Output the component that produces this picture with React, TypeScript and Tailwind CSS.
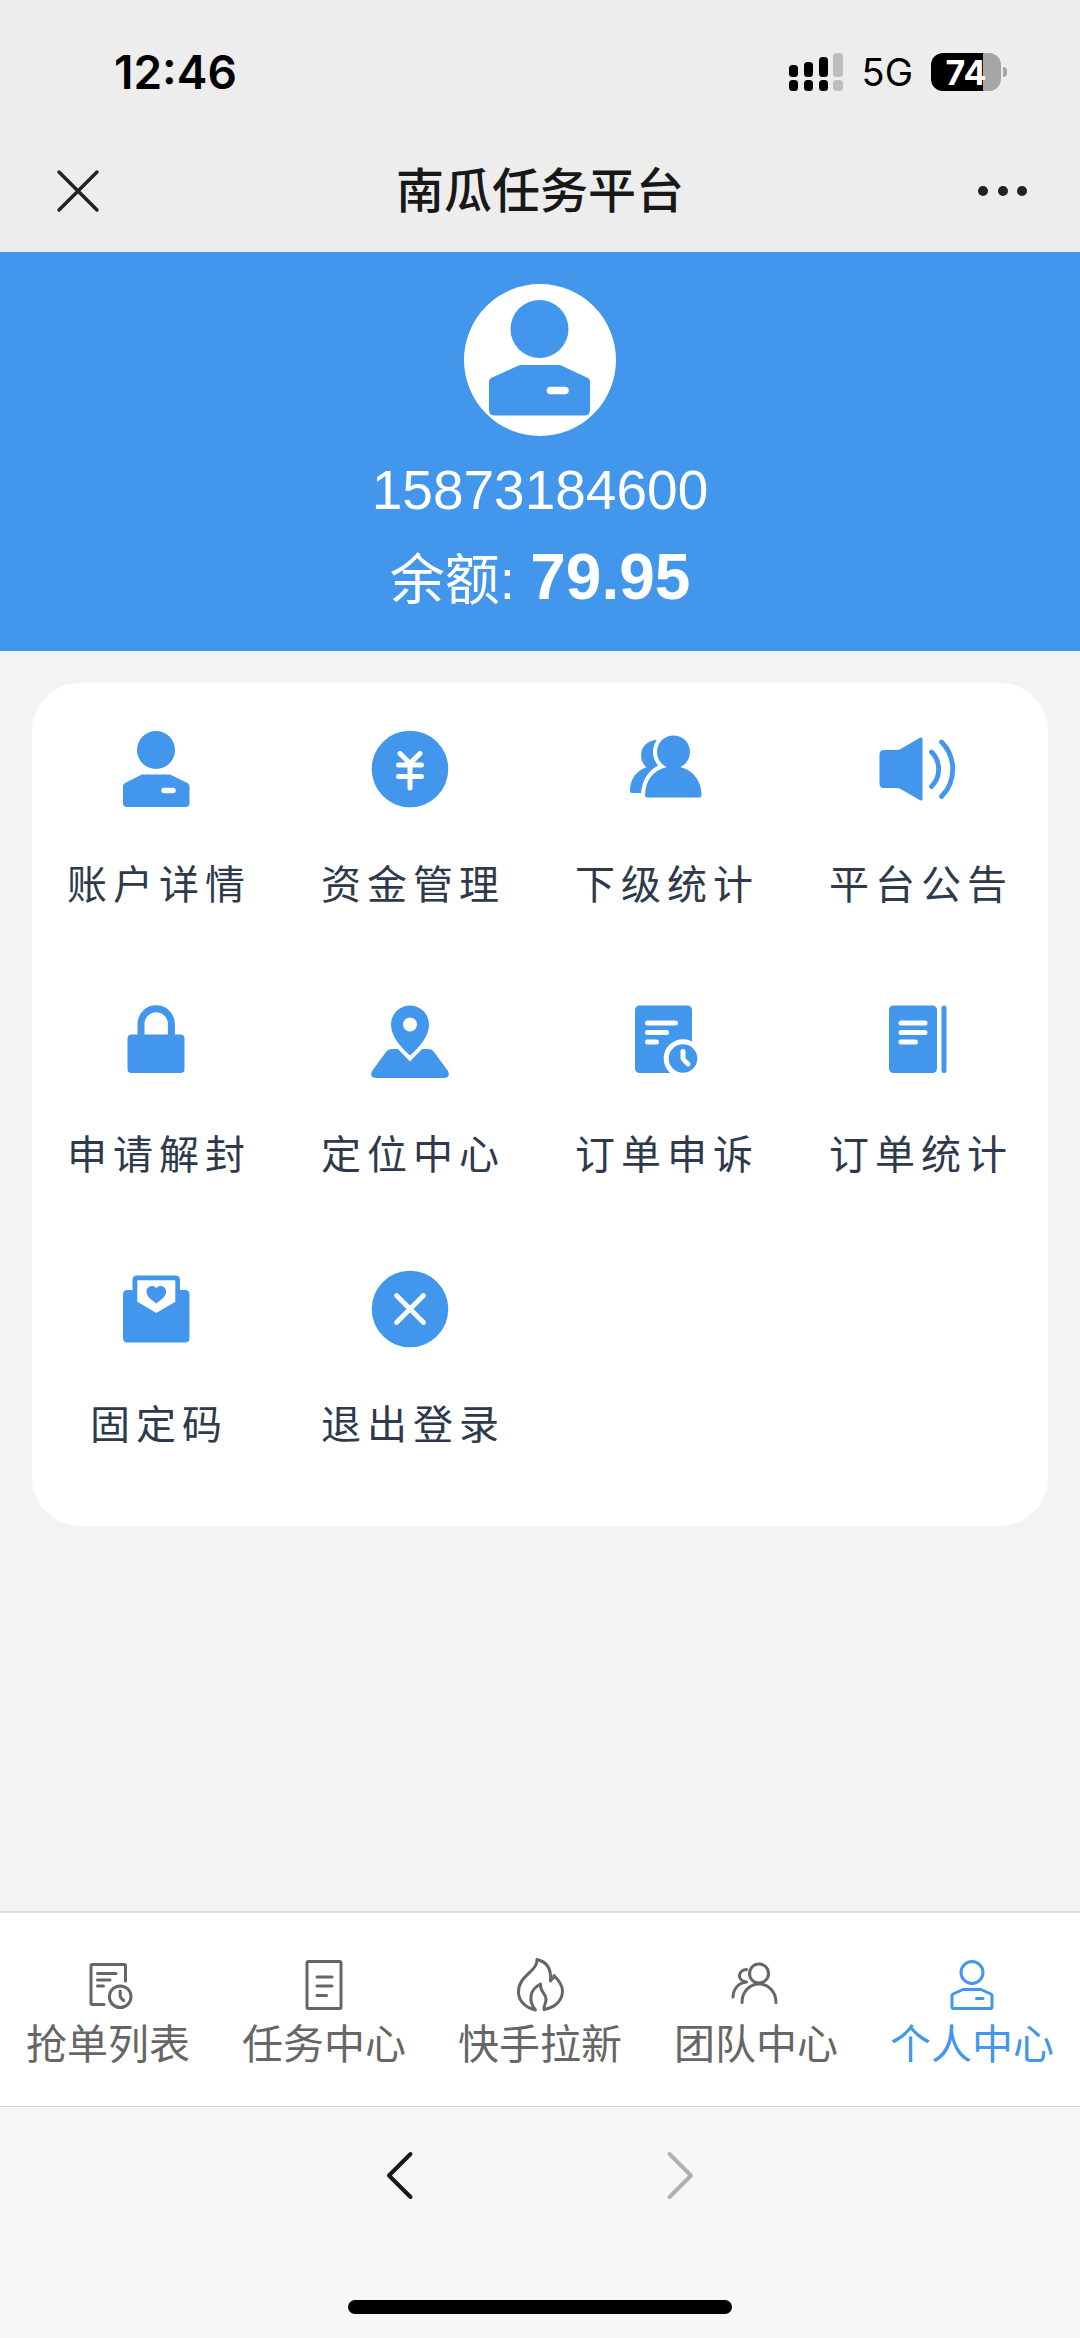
import type { ReactNode } from "react";

type Item = {
  label: string;
  icon: ReactNode;
};

/* Filled icons for the menu grid, drawn on a 96 x 96 box */

function UserFilled() {
  return (
    <>
      <circle cx="48" cy="29" r="19" />
      <path d="M34 53.500h28L79.500 62q2 1 2 3.500V82q0 4-4 4H19q-4 0-4-4V65.500q0-2.500 2-3.500z" />
      <path d="M56 69.500h9" stroke="#fff" strokeWidth="5.500" strokeLinecap="round" />
    </>
  );
}

const menu: Item[] = [
  { label: "账户详情", icon: <UserFilled /> },
  {
    label: "资金管理",
    icon: (
      <>
        <circle cx="48" cy="48" r="38.300" />
        <path
          d="M38 32.500 48 42.500 58 32.500M36.500 44h23M36.500 55.500h23M48 42.500V67"
          fill="none"
          stroke="#fff"
          strokeWidth="5"
          strokeLinecap="round"
          strokeLinejoin="round"
        />
      </>
    ),
  },
  {
    label: "下级统计",
    icon: (
      <>
        <circle cx="40.500" cy="34.500" r="15.500" />
        <path d="M16 72q-2 0-2-2c0-12 6-21 19-24.500h16V72z" />
        <g stroke="#fff" strokeWidth="8" strokeLinejoin="round">
          <circle cx="57.500" cy="31" r="16.500" />
          <path d="M31 76.500q-2 0-2-2C29 60 37 49 51 45.500h13C77 49 85.500 60 85.500 74.500q0 2-2 2z" />
        </g>
        <circle cx="57.500" cy="31" r="16.500" />
        <path d="M31 76.500q-2 0-2-2C29 60 37 49 51 46h13C77 49 85.500 60 85.500 74.500q0 2-2 2z" />
      </>
    ),
  },
  {
    label: "平台公告",
    icon: (
      <>
        <path d="M14 29h13q2 0 4-1.200L50 16.800q2.500-1 2.500 1.200v60q0 2.200-2.500 1.200L31 68.200Q29 67 27 67H14q-4.500 0-4.500-4.500v-29Q9.500 29 14 29z" />
        <path
          d="M61.500 31c9.500 9.500 9.500 25 0 34.500M71.500 21c15 15 15 39.500 0 54.500"
          fill="none"
          stroke="currentColor"
          strokeWidth="4.800"
          strokeLinecap="round"
        />
      </>
    ),
  },
  {
    label: "申请解封",
    icon: (
      <>
        <rect x="19.500" y="43.500" width="57" height="38.500" rx="4" />
        <path d="M33 46V33a15.200 15.200 0 0 1 30.400 0v13" fill="none" stroke="currentColor" strokeWidth="7" />
      </>
    ),
  },
  {
    label: "定位中心",
    icon: (
      <>
        <path d="M30 58h36q4 0 6 3l14 19q3 7-4 7H14q-7 0-4-7l14-19q2-3 6-3z" />
        <path d="M31 53 48 70.500 65 53z" fill="#fff" />
        <path
          fillRule="evenodd"
          d="M48 64.500C38 55.500 29 45 29 33.500a19 19 0 0 1 38 0C67 45 58 55.500 48 64.500zM48 26.500a7 7 0 1 0 0 14 7 7 0 0 0 0-14z"
        />
      </>
    ),
  },
  {
    label: "订单申诉",
    icon: (
      <>
        <rect x="19" y="14.500" width="57" height="67.500" rx="4.500" />
        <path
          d="M31.500 32h28M31.500 41.500h19M31.500 51h9"
          stroke="#fff"
          strokeWidth="5"
          strokeLinecap="round"
        />
        <circle cx="67" cy="67.500" r="16.800" stroke="#fff" strokeWidth="5" />
        <path
          d="M67 60.500v6.500q0 1.500 5 6"
          fill="none"
          stroke="#fff"
          strokeWidth="5"
          strokeLinecap="round"
        />
      </>
    ),
  },
  {
    label: "订单统计",
    icon: (
      <>
        <rect x="19" y="14.500" width="48" height="67.500" rx="4.500" />
        <rect x="71.500" y="14.500" width="5" height="67.500" rx="2.500" />
        <path
          d="M31 32h24M31 41.500h24M31 51h14.500"
          stroke="#fff"
          strokeWidth="5"
          strokeLinecap="round"
        />
      </>
    ),
  },
  {
    label: "固定码",
    icon: (
      <>
        <path d="M29 14.500h38.500q4.500 0 4.500 4.500v10h5q4.500 0 4.500 4.500V77q0 4.500-4.500 4.500H19.500Q15 81.500 15 77V33.500Q15 29 19.500 29h5V19q0-4.500 4.500-4.500z" />
        <path d="M29.300 19.200h38v21.500L48.300 52l-19-11.300z" fill="#fff" />
        <path d="M48.300 42.500c-5-4-9.800-7-9.800-12 0-5.500 7-7.500 9.800-3.500 2.800-4 9.800-2 9.800 3.500 0 5-4.800 8-9.800 12z" />
      </>
    ),
  },
  {
    label: "退出登录",
    icon: (
      <>
        <circle cx="48" cy="48" r="38.300" />
        <path d="m34.500 34.500 27 27m0-27-27 27" stroke="#fff" strokeWidth="4.800" strokeLinecap="round" />
      </>
    ),
  },
];

/* Outlined icons for the tab bar, drawn on a 64 x 64 box */

const tabs: Item[] = [
  {
    label: "抢单列表",
    icon: (
      <>
        <path d="M49.500 28V13q0-1.500-1.500-1.500H16.500Q15 11.500 15 13v37q0 1.500 1.500 1.500H28" />
        <path d="M21.500 20.500H40M21.500 27H34M21.500 33h6" />
        <circle cx="44.200" cy="43.700" r="10.800" />
        <path d="M44.200 38v5q0 1.500 3.500 4.500" />
      </>
    ),
  },
  {
    label: "任务中心",
    icon: (
      <>
        <rect x="15" y="8.500" width="34" height="47" rx="1.500" />
        <path d="M25 24h15M25 33h15M25 42.500h9.500" />
      </>
    ),
  },
  {
    label: "快手拉新",
    icon: (
      <path d="M29 6.500C29.500 19 10.500 22 10.500 39c0 9 7 15.500 17 18-7.500-9-6-20.500 5-26-1 8 5.500 8.500 5.500 15.500 0 4.500-2.500 6-2 10 11-2 18.500-9 18.500-18.500 0-6.500-4-11-8.500-15.500.500 3-2.500 3-3.500 5.500C43.500 15.500 38 8.500 29 6.500z" />
    ),
  },
  {
    label: "团队中心",
    icon: (
      <>
        <circle cx="35" cy="20.500" r="9.500" />
        <path d="M18 49.500C18 39 25.500 31 35 31s17 8 17 18.500" />
        <path d="M22.500 16.500c-9.500 1-9.500 11.500 0 12.500-8.500 1-13 7-13.500 15" />
      </>
    ),
  },
  {
    label: "个人中心",
    icon: (
      <>
        <circle cx="32" cy="19.500" r="11" />
        <path d="M23 36.500h18l10 4.500q1 .500 1 1.500V54q0 1.500-1.500 1.500h-37Q12 55.500 12 54V42.500q0-1 1-1.500z" />
        <path d="M36.500 45.500H43" />
      </>
    ),
  },
];

function StatusBar() {
  return (
    <div className="flex h-36 items-center justify-between pl-[114px] pr-[73px] text-black">
      <time className="font-[Inter,sans-serif] text-[46px] font-semibold">12:46</time>
      <div className="flex items-center gap-[18px]">
        <svg className="h-10 w-14" viewBox="0 0 56 40" aria-hidden="true">
          <rect x="1" y="13" width="9" height="12" rx="3.500" />
          <rect x="16" y="10" width="9" height="15" rx="3.500" />
          <rect x="31" y="5" width="9" height="20" rx="3.500" />
          <rect x="1" y="28" width="9" height="11" rx="3.500" />
          <rect x="16" y="28" width="9" height="11" rx="3.500" />
          <rect x="31" y="28" width="9" height="11" rx="3.500" />
          <g fill="#bdbdbd">
            <rect x="45" y="1" width="10" height="24" rx="3.500" />
            <rect x="45" y="28" width="10" height="11" rx="3.500" />
          </g>
        </svg>
        <span className="font-[Inter,sans-serif] text-[38px]">5G</span>
        <div className="flex items-center gap-0.5">
          <div className="flex h-[38px] w-[70px] items-center justify-center rounded-xl bg-linear-to-r from-black from-75% to-[#a6a6a6] to-75% font-[Inter,sans-serif] text-[34px] font-bold text-white">
            74
          </div>
          <div className="h-2.5 w-1 rounded-r-full bg-[#a6a6a6]" />
        </div>
      </div>
    </div>
  );
}

export default function App() {
  return (
    <div className="flex min-h-screen flex-col bg-[#f3f3f3] font-['Liberation_Sans','Noto_Sans_CJK_SC',sans-serif]">
      <header className="bg-[#ededed] pb-3">
        <StatusBar />
        <div className="flex h-24 items-center justify-between px-12">
          <button type="button" aria-label="关闭">
            <svg className="size-15" viewBox="0 0 60 60" stroke="#222" strokeWidth="3.500" strokeLinecap="round">
              <path d="m11 10 38 38m0-38L11 48" />
            </svg>
          </button>
          <h1 className="text-5xl font-medium text-[#181818]">南瓜任务平台</h1>
          <button type="button" aria-label="更多">
            <svg className="size-15" viewBox="0 0 60 60" fill="#222">
              <circle cx="11" cy="29" r="5" />
              <circle cx="31" cy="29" r="5" />
              <circle cx="50" cy="29" r="5" />
            </svg>
          </button>
        </div>
      </header>

      <main className="flex-1">
        {/* Profile */}
        <section className="flex flex-col items-center bg-[#4296ec] pb-[26px] pt-8 text-white">
          <div className="size-38 overflow-hidden rounded-full bg-white text-[#4296ec]">
            <svg className="size-full" viewBox="0 0 152 152" fill="currentColor" aria-hidden="true">
              <circle cx="75.500" cy="45" r="29" />
              <path d="M56 81h40L123 93.500q3 1.500 3 4.500v28q0 5.500-5.500 5.500h-90Q25 131.500 25 126V98q0-3 3-4.500z" />
              <path d="M86.500 106.500h14.500" stroke="#fff" strokeWidth="7.500" strokeLinecap="round" />
            </svg>
          </div>
          <p className="mt-3 text-[55px] leading-[84px]">15873184600</p>
          <p className="text-[55px] leading-[90px]">
            余额: <strong className="text-[64px] font-bold">79.95</strong>
          </p>
        </section>

        {/* Menu */}
        <section className="m-8 grid grid-cols-4 rounded-[48px] bg-white pb-[17px] pt-4">
          {menu.map((item) => (
            <a
              key={item.label}
              href="#"
              className="pb-14 pt-[22px] text-center text-[40px] leading-14 tracking-[6px] text-[#2e394b]"
            >
              <svg
                className="mb-10 mr-1.5 inline-block size-24 align-top text-[#4296ec]"
                viewBox="0 0 96 96"
                fill="currentColor"
                aria-hidden="true"
              >
                {item.icon}
              </svg>
              <span className="block">{item.label}</span>
            </a>
          ))}
        </section>
      </main>

      {/* Tab bar */}
      <nav className="grid grid-cols-5 border-t-2 border-[#dcdcdc] bg-white">
        {tabs.map((tab) => {
          const active = tab.label === "个人中心";
          return (
            <a
              key={tab.label}
              href="#"
              aria-current={active ? "page" : undefined}
              className={`flex flex-col items-center pb-[33px] pt-10 text-[41px] leading-14 ${
                active ? "text-[#4296ec]" : "text-[#666]"
              }`}
            >
              <svg
                className="size-16"
                viewBox="0 0 64 64"
                fill="none"
                stroke="currentColor"
                strokeWidth="3"
                strokeLinecap="round"
                strokeLinejoin="round"
                aria-hidden="true"
              >
                {tab.icon}
              </svg>
              {tab.label}
            </a>
          );
        })}
      </nav>

      <footer className="flex flex-col items-center border-t border-[#d8d8d8] bg-[#f7f7f7] pb-6 pt-9">
        <div className="flex gap-54">
          <button type="button" aria-label="后退" className="text-[#181818]">
            <svg className="size-16" viewBox="0 0 64 64" fill="none" stroke="currentColor" strokeWidth="4" strokeLinecap="round">
              <path d="M42.500 11 21 32.500 42.500 54" strokeLinejoin="round" />
            </svg>
          </button>
          <button type="button" aria-label="前进" disabled className="text-[#b0b0b0]">
            <svg className="size-16" viewBox="0 0 64 64" fill="none" stroke="currentColor" strokeWidth="4" strokeLinecap="round">
              <path d="M21.500 11 43 32.500 21.500 54" strokeLinejoin="round" />
            </svg>
          </button>
        </div>
        <div className="mt-[93px] h-3.5 w-96 rounded-full bg-black" />
      </footer>
    </div>
  );
}
